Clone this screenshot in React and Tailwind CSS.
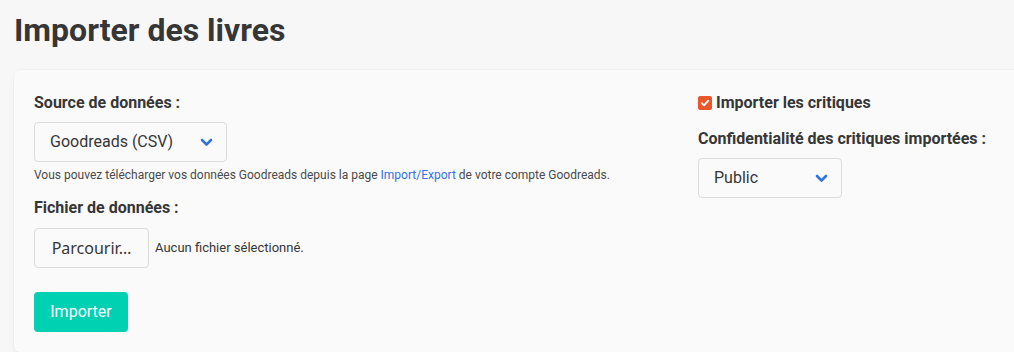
import React from "react";

function Chevron({ className = "" }) {
  return (
    <svg className={className} width="13" height="9" viewBox="0 0 13 9" fill="none">
      <path d="M2 2 L6.5 6.5 L11 2" stroke="#3273dc" strokeWidth="2.6" strokeLinecap="round" strokeLinejoin="round" />
    </svg>
  );
}

function Select({ value, width }) {
  return (
    <div
      className="flex h-[40px] items-center justify-between rounded-[4px] border border-[#dbdbdb] bg-[#fafafa] pl-[15px] pr-[13px] text-[16px] text-[#363636]"
      style={{ width }}
    >
      <span>{value}</span>
      <Chevron />
    </div>
  );
}

export default function App() {
  return (
    <div
      className="h-[352px] w-[1014px] overflow-hidden bg-[#f7f7f7] pl-[14px] pt-[10px]"
      style={{ fontFamily: "Roboto, 'Liberation Sans', sans-serif" }}
    >
      <h1 className="text-[32px] font-bold leading-[40px] text-[#363636]">Importer des livres</h1>
      <div className="mt-[20px] w-[1040px] rounded-[6px] bg-[#fafafa] px-[20px] pb-[20px] pt-[21px] shadow-[0_4px_10px_-2px_rgba(10,10,10,0.06),0_0_0_1px_rgba(10,10,10,0.02)]">
        <div className="grid grid-cols-[664px_1fr]">
          <div>
            <div className="mb-[7px] text-[16px] font-bold leading-[24px] text-[#363636]">Source de données :</div>
            <Select value="Goodreads (CSV)" width="193px" />
            <p className="mt-[4px] text-[12px] leading-[18px] text-[#4a4a4a]">
              Vous pouvez télécharger vos données Goodreads depuis la page{" "}
              <span className="text-[#3273dc]">Import/Export</span> de votre compte Goodreads.
            </p>
            <div className="mb-[8px] mt-[12px] text-[16px] font-bold leading-[24px] text-[#363636]">Fichier de données :</div>
            <div className="flex items-center">
              <div
                className="flex h-[40px] w-[115px] items-center justify-center rounded-[4px] border border-[#dbdbdb] bg-[#fafafa] text-[16px] text-[#363636]"
                style={{ fontFamily: "'Noto Sans', 'Open Sans', sans-serif" }}
              >
                Parcourir…
              </div>
              <span className="ml-[6px] text-[13px] text-[#363636]">Aucun fichier sélectionné.</span>
            </div>
            <div className="mt-[24px] flex h-[40px] w-[94px] items-center justify-center rounded-[4px] bg-[#00d1b2] text-[16px] text-white">
              Importer
            </div>
          </div>
          <div>
            <div className="flex items-center text-[16px] font-bold leading-[24px] text-[#363636]">
              <span className="mr-[4px] flex h-[14px] w-[14px] items-center justify-center rounded-[2px] bg-[#e9572b]">
                <svg width="10" height="10" viewBox="0 0 10 10" fill="none">
                  <path d="M1.8 5.2 L4 7.4 L8.3 2.6" stroke="white" strokeWidth="1.8" strokeLinecap="round" strokeLinejoin="round" />
                </svg>
              </span>
              Importer les critiques
            </div>
            <div className="mb-[7px] mt-[12px] text-[16px] font-bold leading-[24px] text-[#363636]">
              Confidentialité des critiques importées :
            </div>
            <Select value="Public" width="144px" />
          </div>
        </div>
      </div>
    </div>
  );
}
